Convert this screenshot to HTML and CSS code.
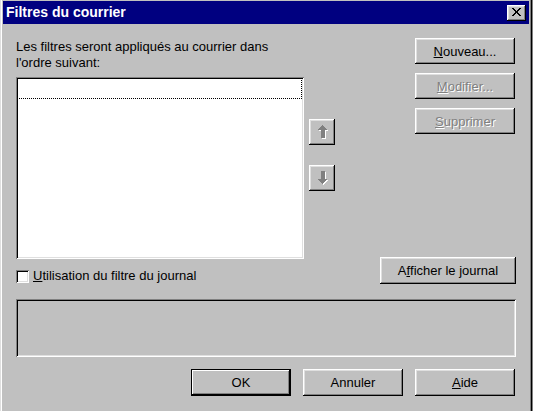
FILE: index.html
```html
<!DOCTYPE html>
<html lang="fr">
<head>
<meta charset="utf-8">
<title>Filtres du courrier</title>
<link rel="stylesheet" href="styles.css">
</head>
<body>
<div class="window">
  <div class="titlebar">
    <span class="title">Filtres du courrier</span>
    <button class="btn close" aria-label="Fermer">
      <svg width="9" height="8" viewBox="0 0 9 8" shape-rendering="crispEdges">
        <path d="M0 0h2v1H0zM7 0h2v1H7zM1 1h2v1H1zM6 1h2v1H6zM2 2h2v1H2zM5 2h2v1H5zM3 3h3v1H3zM3 4h3v1H3zM2 5h2v1H2zM5 5h2v1H5zM1 6h2v1H1zM6 6h2v1H6zM0 7h2v1H0zM7 7h2v1H7z" fill="#000"/>
      </svg>
    </button>
  </div>
  <div class="body">
    <div class="top">
      <div class="left">
        <p class="intro">Les filtres seront appliqués au courrier dans<br>l'ordre suivant:</p>
        <div class="list-row">
          <div class="listbox"><div class="item"></div></div>
          <div class="arrows">
            <button class="btn arrow" aria-label="Monter">
              <svg width="11" height="15" viewBox="0 0 11 15" shape-rendering="crispEdges">
                <path d="M6 1h1v1h1v1h1v1h1v1h1v1H9v8H5V6H2V5h1V4h1V3h1V2h1z" fill="#fff"/>
                <path d="M5 0h1v1h1v1h1v1h1v1h1v1H8v8H4V5H1V4h1V3h1V2h1V1h1z" fill="#808080"/>
              </svg>
            </button>
            <button class="btn arrow" aria-label="Descendre">
              <svg width="11" height="15" viewBox="0 0 11 15" shape-rendering="crispEdges">
                <path d="M5 1h4v8h2v1h-1v1H9v1H8v1H7v1H6v-1H5v-1H4v-1H3v-1H2V9h3z" fill="#fff"/>
                <path d="M4 0h4v8h2v1H9v1H8v1H7v1H6v1H5v-1H4v-1H3v-1H2V9H1V8h3z" fill="#808080"/>
              </svg>
            </button>
          </div>
        </div>
      </div>
      <div class="side">
        <button class="btn"><u>N</u>ouveau...</button>
        <button class="btn" disabled><u>M</u>odifier...</button>
        <button class="btn" disabled><u>S</u>upprimer</button>
      </div>
    </div>
    <div class="log-row">
      <label class="check"><span class="box"></span><span><u>U</u>tilisation du filtre du journal</span></label>
      <button class="btn wide">A<u>f</u>ficher le journal</button>
    </div>
    <div class="panel"></div>
    <div class="actions">
      <button class="btn default">OK</button>
      <button class="btn">Annuler</button>
      <button class="btn"><u>A</u>ide</button>
    </div>
  </div>
</div>
</body>
</html>
```

FILE: styles.css
```css
* { box-sizing: border-box; }

body {
  margin: 0;
  background: #808080;
  font-family: "Liberation Sans", Arial, sans-serif;
  font-size: 13px;
  color: #000;
}

.window {
  width: 532px;
  height: 420px;
  background: #c0c0c0;
  padding: 1px 3px 0 3px;
  box-shadow: inset 1px 0 #dfdfdf, inset 2px 0 #fff, inset -1px 0 #000, inset -2px 0 #808080;
}

.titlebar {
  height: 23px;
  background: #000080;
  display: flex;
  align-items: center;
  justify-content: space-between;
  padding: 0 3px 0 3px;
}

.title {
  color: #fff;
  font-weight: bold;
  font-size: 14px;
  line-height: 23px;
}

.btn {
  appearance: none;
  margin: 0;
  border: 0;
  padding: 0;
  background: #c0c0c0;
  font: inherit;
  color: #000;
  display: flex;
  align-items: center;
  justify-content: center;
  width: 100px;
  height: 26px;
  box-shadow: inset -1px -1px #000, inset 1px 1px #fff, inset -2px -2px #808080, inset 2px 2px #dfdfdf;
}

.btn:disabled {
  color: #808080;
  text-shadow: 1px 1px 0 #fff;
}

.btn u { text-underline-offset: 1px; }

.close {
  width: 19px;
  height: 16px;
  padding: 0 1px 1px 0;
}

.body {
  padding: 15px 13px 0 13px;
}

.top {
  display: flex;
  justify-content: space-between;
  padding-right: 1px;
}

.left {
  display: flex;
  flex-direction: column;
}

.intro {
  margin: 0;
  line-height: 16px;
}

.list-row {
  display: flex;
  gap: 5px;
  margin-top: 6px;
}

.listbox {
  width: 288px;
  height: 182px;
  background: #fff;
  padding: 1px 2px 0 1px;
  box-shadow: inset 1px 1px #808080, inset -1px -1px #fff, inset 2px 2px #000, inset -2px -2px #dfdfdf;
}

.item {
  height: 21px;
  border: 1px dotted #000;
}

.arrows {
  display: flex;
  flex-direction: column;
  gap: 20px;
  margin-top: 42px;
}

.arrow {
  width: 26px;
  height: 26px;
}

.side {
  display: flex;
  flex-direction: column;
  gap: 9px;
  margin-top: -1px;
}

.log-row {
  display: flex;
  justify-content: space-between;
  align-items: flex-end;
  margin-top: -2px;
}

.check {
  display: flex;
  align-items: flex-end;
  gap: 4px;
  line-height: 16px;
}

.box {
  width: 13px;
  height: 13px;
  margin-bottom: 1px;
  background: #fff;
  box-shadow: inset 1px 1px #808080, inset -1px -1px #fff, inset 2px 2px #000, inset -2px -2px #dfdfdf;
}

.check u { text-underline-offset: 1px; }

.wide {
  width: 136px;
  height: 27px;
}

.panel {
  margin-top: 15px;
  width: 500px;
  height: 58px;
  box-shadow: inset 1px 1px #808080, inset -1px -1px #fff, inset 2px 2px #000, inset -2px -2px #dfdfdf;
}

.actions {
  display: flex;
  justify-content: flex-end;
  gap: 12px;
  margin-top: 12px;
  padding-right: 1px;
}

.actions .btn {
  height: 27px;
}

.btn.default {
  border: 1px solid #000;
  box-shadow: inset -1px -1px #000, inset 1px 1px #fff, inset -2px -2px #808080;
}
```
